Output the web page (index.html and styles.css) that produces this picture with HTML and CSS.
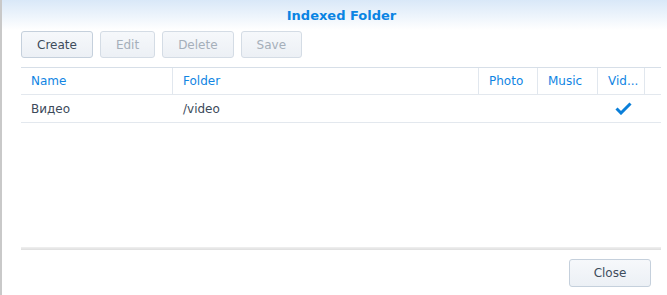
FILE: index.html
```html
<!DOCTYPE html>
<html>
<head>
<meta charset="utf-8">
<link rel="stylesheet" href="styles.css">
</head>
<body>
<div class="window">
  <div class="titlebar"><span class="title">Indexed Folder</span></div>
  <div class="body">
    <div class="toolbar">
      <button class="btn">Create</button>
      <button class="btn disabled">Edit</button>
      <button class="btn disabled">Delete</button>
      <button class="btn disabled">Save</button>
    </div>
    <div class="grid">
      <div class="row head">
        <div class="cell c-name">Name</div>
        <div class="cell c-folder">Folder</div>
        <div class="cell c-photo">Photo</div>
        <div class="cell c-music">Music</div>
        <div class="cell c-video">Vid...</div>
        <div class="cell c-rest"></div>
      </div>
      <div class="row data">
        <div class="cell c-name">Видео</div>
        <div class="cell c-folder">/video</div>
        <div class="cell c-photo"></div>
        <div class="cell c-music"></div>
        <div class="cell c-video check">
          <svg width="17" height="13" viewBox="0 0 17 13"><path d="M1.5 6.5 L6 11 L15.5 1.5" fill="none" stroke="#0a7fd9" stroke-width="3"/></svg>
        </div>
        <div class="cell c-rest"></div>
      </div>
    </div>
    <div class="spacer"></div>
    <div class="sep"></div>
    <div class="footer">
      <button class="btn close">Close</button>
    </div>
  </div>
</div>
</body>
</html>
```
FILE: styles.css
```css
html, body {
  margin: 0;
  padding: 0;
  background: #fff;
}
body {
  font-family: "DejaVu Sans", Verdana, sans-serif;
  font-size: 12px;
  color: #3c4a5a;
}
.window {
  height: 295px;
  border-left: 2px solid #c9c9c9;
  box-sizing: border-box;
  display: flex;
  flex-direction: column;
}
.titlebar {
  height: 30px;
  background: linear-gradient(#d9e8f8, #ffffff);
  display: flex;
  align-items: center;
  justify-content: center;
  padding-left: 14px;
}
.title {
  font-weight: bold;
  font-size: 13px;
  color: #0a84e3;
}
.body {
  flex: 1;
  display: flex;
  flex-direction: column;
  padding: 1px 6px 8px 19px;
}
.toolbar {
  display: flex;
  gap: 7px;
  height: 27px;
}
.btn {
  font-family: "DejaVu Sans", Verdana, sans-serif;
  font-size: 12px;
  height: 27px;
  padding: 0 15px;
  border: 1px solid #c5d0dc;
  border-radius: 3px;
  background: linear-gradient(#f6f8fb, #ecf0f5);
  color: #3e4c5c;
}
.btn.disabled {
  color: #a5afba;
  border-color: #d4dce5;
}
.grid {
  margin-top: 9px;
  border-top: 1px solid #d7dfe8;
}
.row {
  display: flex;
  height: 27px;
  box-sizing: border-box;
  border-bottom: 1px solid #e3e8ee;
}
.data.row { height: 28px; }
.cell {
  display: flex;
  align-items: center;
  padding-left: 10px;
  box-sizing: border-box;
  white-space: nowrap;
}
.head .cell {
  color: #1185e3;
  border-right: 1px solid #e1e7ee;
}
.head .c-rest { border-right: none; }
.c-name { width: 152px; }
.c-folder { width: 306px; }
.c-photo { width: 59px; }
.c-music { width: 60px; }
.c-video { width: 47px; }
.c-rest { flex: 1; }
.data .cell { color: #3c4a5a; }
.check { justify-content: center; padding-left: 4px; }
.spacer { flex: 1; }
.sep {
  height: 3px;
  background: linear-gradient(#f0f0f0, #dedede);
}
.footer {
  display: flex;
  justify-content: flex-end;
  padding-top: 9px;
  padding-right: 10px;
}
.btn.close {
  width: 82px;
  height: 28px;
  color: #3e4c5c;
}
```
